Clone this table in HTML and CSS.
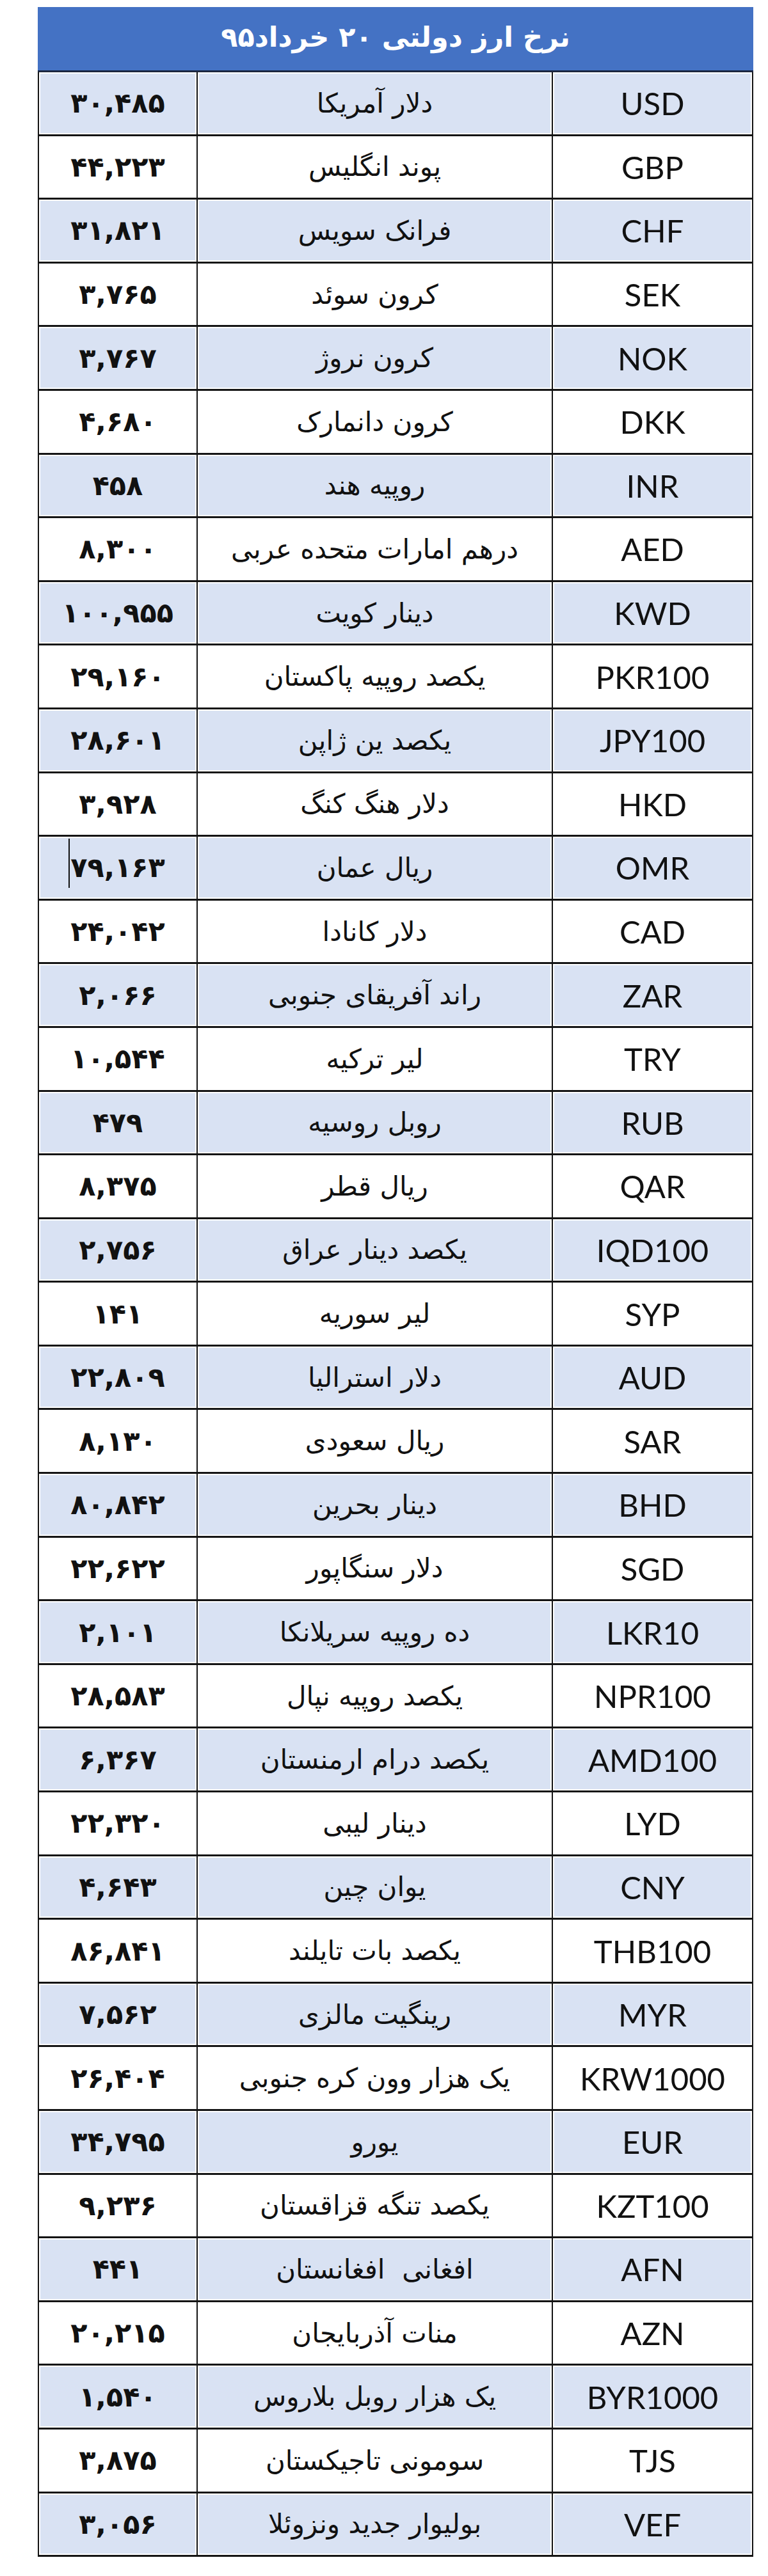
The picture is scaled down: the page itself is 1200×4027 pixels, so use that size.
FILE: index.html
```html
<!DOCTYPE html>
<html lang="fa">
<head>
<meta charset="utf-8">
<title>نرخ ارز دولتی ۲۰ خرداد۹۵</title>
<link rel="stylesheet" href="styles.css">
</head>
<body>
<div class="page">
  <div class="sheet">
    <div class="title">نرخ ارز دولتی ۲۰ خرداد۹۵</div>
    <div class="rows">
      <div class="row alt"><div class="c code">USD</div><div class="c name">دلار آمریکا</div><div class="c val">۳۰,۴۸۵</div></div>
      <div class="row"><div class="c code">GBP</div><div class="c name">پوند انگلیس</div><div class="c val">۴۴,۲۲۳</div></div>
      <div class="row alt"><div class="c code">CHF</div><div class="c name">فرانک سویس</div><div class="c val">۳۱,۸۲۱</div></div>
      <div class="row"><div class="c code">SEK</div><div class="c name">کرون سوئد</div><div class="c val">۳,۷۶۵</div></div>
      <div class="row alt"><div class="c code">NOK</div><div class="c name">کرون نروژ</div><div class="c val">۳,۷۶۷</div></div>
      <div class="row"><div class="c code">DKK</div><div class="c name">کرون دانمارک</div><div class="c val">۴,۶۸۰</div></div>
      <div class="row alt"><div class="c code">INR</div><div class="c name">روپیه هند</div><div class="c val">۴۵۸</div></div>
      <div class="row"><div class="c code">AED</div><div class="c name">درهم امارات متحده عربی</div><div class="c val">۸,۳۰۰</div></div>
      <div class="row alt"><div class="c code">KWD</div><div class="c name">دینار کویت</div><div class="c val">۱۰۰,۹۵۵</div></div>
      <div class="row"><div class="c code">PKR100</div><div class="c name">یکصد روپیه پاکستان</div><div class="c val">۲۹,۱۶۰</div></div>
      <div class="row alt"><div class="c code">JPY100</div><div class="c name">یکصد ین ژاپن</div><div class="c val">۲۸,۶۰۱</div></div>
      <div class="row"><div class="c code">HKD</div><div class="c name">دلار هنگ کنگ</div><div class="c val">۳,۹۲۸</div></div>
      <div class="row alt"><div class="c code">OMR</div><div class="c name">ریال عمان</div><div class="c val">۷۹,۱۶۳<span class="caret"></span></div></div>
      <div class="row"><div class="c code">CAD</div><div class="c name">دلار کانادا</div><div class="c val">۲۴,۰۴۲</div></div>
      <div class="row alt"><div class="c code">ZAR</div><div class="c name">راند آفریقای جنوبی</div><div class="c val">۲,۰۶۶</div></div>
      <div class="row"><div class="c code">TRY</div><div class="c name">لیر ترکیه</div><div class="c val">۱۰,۵۴۴</div></div>
      <div class="row alt"><div class="c code">RUB</div><div class="c name">روبل روسیه</div><div class="c val">۴۷۹</div></div>
      <div class="row"><div class="c code">QAR</div><div class="c name">ریال قطر</div><div class="c val">۸,۳۷۵</div></div>
      <div class="row alt"><div class="c code">IQD100</div><div class="c name">یکصد دینار عراق</div><div class="c val">۲,۷۵۶</div></div>
      <div class="row"><div class="c code">SYP</div><div class="c name">لیر سوریه</div><div class="c val">۱۴۱</div></div>
      <div class="row alt"><div class="c code">AUD</div><div class="c name">دلار استرالیا</div><div class="c val">۲۲,۸۰۹</div></div>
      <div class="row"><div class="c code">SAR</div><div class="c name">ریال سعودی</div><div class="c val">۸,۱۳۰</div></div>
      <div class="row alt"><div class="c code">BHD</div><div class="c name">دینار بحرین</div><div class="c val">۸۰,۸۴۲</div></div>
      <div class="row"><div class="c code">SGD</div><div class="c name">دلار سنگاپور</div><div class="c val">۲۲,۶۲۲</div></div>
      <div class="row alt"><div class="c code">LKR10</div><div class="c name">ده روپیه سریلانکا</div><div class="c val">۲,۱۰۱</div></div>
      <div class="row"><div class="c code">NPR100</div><div class="c name">یکصد روپیه نپال</div><div class="c val">۲۸,۵۸۳</div></div>
      <div class="row alt"><div class="c code">AMD100</div><div class="c name">یکصد درام ارمنستان</div><div class="c val">۶,۳۶۷</div></div>
      <div class="row"><div class="c code">LYD</div><div class="c name">دینار لیبی</div><div class="c val">۲۲,۳۲۰</div></div>
      <div class="row alt"><div class="c code">CNY</div><div class="c name">یوان چین</div><div class="c val">۴,۶۴۳</div></div>
      <div class="row"><div class="c code">THB100</div><div class="c name">یکصد بات تایلند</div><div class="c val">۸۶,۸۴۱</div></div>
      <div class="row alt"><div class="c code">MYR</div><div class="c name">رینگیت مالزی</div><div class="c val">۷,۵۶۲</div></div>
      <div class="row"><div class="c code">KRW1000</div><div class="c name">یک هزار وون کره جنوبی</div><div class="c val">۲۶,۴۰۴</div></div>
      <div class="row alt"><div class="c code">EUR</div><div class="c name">یورو</div><div class="c val">۳۴,۷۹۵</div></div>
      <div class="row"><div class="c code">KZT100</div><div class="c name">یکصد تنگه قزاقستان</div><div class="c val">۹,۲۳۶</div></div>
      <div class="row alt"><div class="c code">AFN</div><div class="c name">افغانی  افغانستان</div><div class="c val">۴۴۱</div></div>
      <div class="row"><div class="c code">AZN</div><div class="c name">منات آذربایجان</div><div class="c val">۲۰,۲۱۵</div></div>
      <div class="row alt"><div class="c code">BYR1000</div><div class="c name">یک هزار روبل بلاروس</div><div class="c val">۱,۵۴۰</div></div>
      <div class="row"><div class="c code">TJS</div><div class="c name">سومونی تاجیکستان</div><div class="c val">۳,۸۷۵</div></div>
      <div class="row alt"><div class="c code">VEF</div><div class="c name">بولیوار جدید ونزوئلا</div><div class="c val">۳,۰۵۶</div></div>
    </div>
  </div>
</div>
</body>
</html>
```

FILE: styles.css
```css
html, body {
  margin: 0;
  padding: 0;
  background: #ffffff;
}

.page {
  width: 1200px;
  padding: 11px 23px 29px 59px;
  box-sizing: border-box;
}

.sheet {
  width: 1118px;
  direction: rtl;
}

.title {
  height: 102px;
  box-sizing: border-box;
  background: #4472c4;
  border-bottom: 3px solid #1c2740;
  color: #ffffff;
  font-family: "DejaVu Sans", sans-serif;
  font-weight: bold;
  font-size: 43px;
  display: flex;
  align-items: center;
  justify-content: center;
  padding-bottom: 6px;
}

.rows {
  border-left: 2px solid #141414;
  border-right: 2px solid #141414;
}

.row {
  display: grid;
  grid-template-columns: 313px 555px 246px;
  height: 99.6px;
  box-sizing: border-box;
  border-bottom: 3px solid #141414;
}

.c {
  position: relative;
  display: flex;
  align-items: center;
  justify-content: center;
  color: #111111;
  box-sizing: border-box;
}

.code {
  border-left: 2px solid #141414;
  font-family: Lato, "Open Sans", sans-serif;
  font-size: 49px;
  font-weight: 400;
}

.name {
  border-left: 2px solid #141414;
  font-family: "DejaVu Sans", sans-serif;
  font-size: 42px;
  white-space: pre;
}

.val {
  direction: ltr;
  font-family: "DejaVu Sans", sans-serif;
  font-weight: bold;
  font-size: 43px;
}

.row.alt .c {
  background: #d9e2f3;
  box-shadow: inset 0 0 0 2px #ffffff;
}

.caret {
  position: absolute;
  left: 46px;
  top: 3px;
  width: 2px;
  height: 77px;
  background: #111111;
}
```
